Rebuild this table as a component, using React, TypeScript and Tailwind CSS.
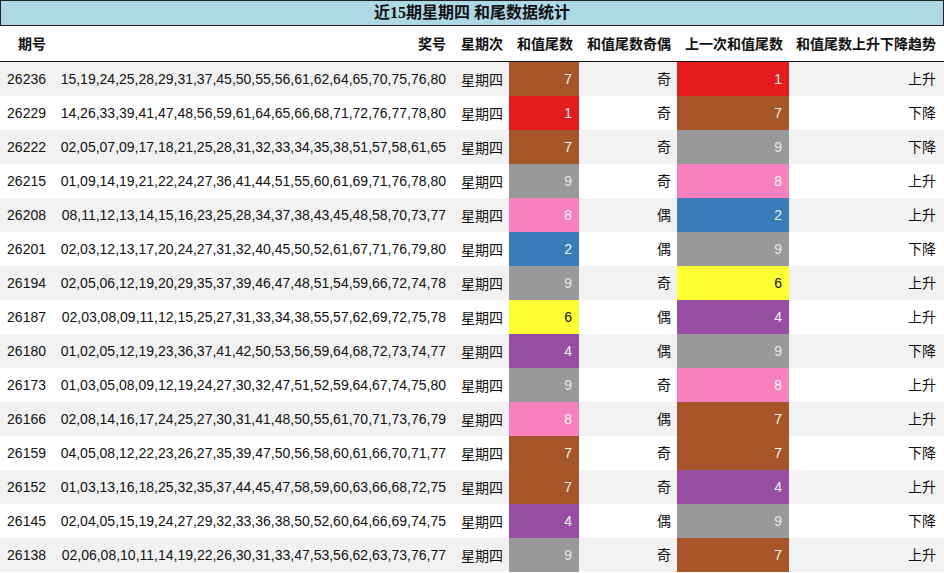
import React from "react";

const COLORS: Record<number, string> = {
  7: "bg-[#a65628] text-[#f4f4f4]",
  1: "bg-[#e41a1c] text-[#f4f4f4]",
  9: "bg-[#999999] text-[#e8e8e8]",
  8: "bg-[#f781bf] text-[#f4f4f4]",
  2: "bg-[#377eb8] text-[#f4f4f4]",
  6: "bg-[#ffff33] text-[#111]",
  4: "bg-[#984ea3] text-[#f4f4f4]",
};

const rows: [string, string, number, string, number, string][] = [
  ["26236", "15,19,24,25,28,29,31,37,45,50,55,56,61,62,64,65,70,75,76,80", 7, "奇", 1, "上升"],
  ["26229", "14,26,33,39,41,47,48,56,59,61,64,65,66,68,71,72,76,77,78,80", 1, "奇", 7, "下降"],
  ["26222", "02,05,07,09,17,18,21,25,28,31,32,33,34,35,38,51,57,58,61,65", 7, "奇", 9, "下降"],
  ["26215", "01,09,14,19,21,22,24,27,36,41,44,51,55,60,61,69,71,76,78,80", 9, "奇", 8, "上升"],
  ["26208", "08,11,12,13,14,15,16,23,25,28,34,37,38,43,45,48,58,70,73,77", 8, "偶", 2, "上升"],
  ["26201", "02,03,12,13,17,20,24,27,31,32,40,45,50,52,61,67,71,76,79,80", 2, "偶", 9, "下降"],
  ["26194", "02,05,06,12,19,20,29,35,37,39,46,47,48,51,54,59,66,72,74,78", 9, "奇", 6, "上升"],
  ["26187", "02,03,08,09,11,12,15,25,27,31,33,34,38,55,57,62,69,72,75,78", 6, "偶", 4, "上升"],
  ["26180", "01,02,05,12,19,23,36,37,41,42,50,53,56,59,64,68,72,73,74,77", 4, "偶", 9, "下降"],
  ["26173", "01,03,05,08,09,12,19,24,27,30,32,47,51,52,59,64,67,74,75,80", 9, "奇", 8, "上升"],
  ["26166", "02,08,14,16,17,24,25,27,30,31,41,48,50,55,61,70,71,73,76,79", 8, "偶", 7, "上升"],
  ["26159", "04,05,08,12,22,23,26,27,35,39,47,50,56,58,60,61,66,70,71,77", 7, "奇", 7, "下降"],
  ["26152", "01,03,13,16,18,25,32,35,37,44,45,47,58,59,60,63,66,68,72,75", 7, "奇", 4, "上升"],
  ["26145", "02,04,05,15,19,24,27,29,32,33,36,38,50,52,60,64,66,69,74,75", 4, "偶", 9, "下降"],
  ["26138", "02,06,08,10,11,14,19,22,26,30,31,33,47,53,56,62,63,73,76,77", 9, "奇", 7, "上升"],
];

const font = { fontFamily: '"Liberation Sans", "Noto Sans CJK SC", sans-serif' };

export default function App() {
  return (
    <div className="w-[944px] h-[573px] bg-white text-[14px] text-[#111] overflow-hidden" style={font}>
      <div
        className="h-[26px] border border-[#222] bg-[#add8e6] flex items-center justify-center font-bold text-[16px] leading-none"
        style={{ fontFamily: '"Liberation Serif", "Noto Sans CJK SC", serif' }}
      >
        近15期星期四 和尾数据统计
      </div>
      <div className="flex h-[36px] items-center border-b border-[#111] font-bold pt-[1px]">
        <div className="w-[54px] text-right pr-[8px]">期号</div>
        <div className="w-[398px] text-right pr-[6px]">奖号</div>
        <div className="w-[57px] text-right pr-[6px]">星期次</div>
        <div className="w-[70px] text-right pr-[6px]">和值尾数</div>
        <div className="w-[98px] text-right pr-[6px]">和值尾数奇偶</div>
        <div className="w-[112px] text-right pr-[6px]">上一次和值尾数</div>
        <div className="w-[155px] text-right pr-[8px]">和值尾数上升下降趋势</div>
      </div>
      {rows.map((r, i) => (
        <div key={r[0]} className={`flex h-[34px] items-stretch ${i % 2 === 0 ? "bg-[#f2f2f2]" : "bg-white"}`}>
          <div className="w-[54px] flex items-center justify-end pr-[8px]">{r[0]}</div>
          <div className="w-[398px] flex items-center justify-end pr-[6px]">{r[1]}</div>
          <div className="w-[57px] flex items-center justify-end pr-[6px] pt-[3px]">星期四</div>
          <div className={`w-[70px] flex items-center justify-end pr-[7px] ${COLORS[r[2]]}`}>{r[2]}</div>
          <div className="w-[98px] flex items-center justify-end pr-[6px]">{r[3]}</div>
          <div className={`w-[112px] flex items-center justify-end pr-[7px] ${COLORS[r[4]]}`}>{r[4]}</div>
          <div className="w-[155px] flex items-center justify-end pr-[8px]">{r[5]}</div>
        </div>
      ))}
    </div>
  );
}
